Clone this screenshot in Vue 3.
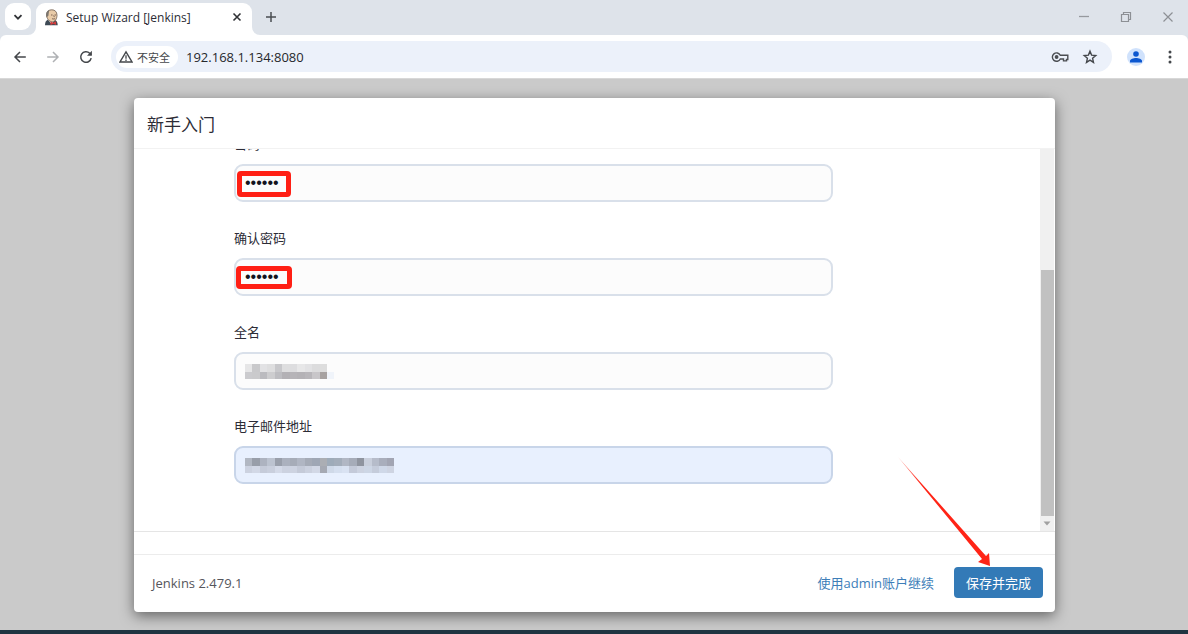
<script setup>
import { ref } from 'vue'

const CELL = 7.45

const fullNameCells = [
  ['#e6e6e7', '#c9c9cb', '#e2e2e4', '#dededf', '#c8c8cb', '#dededf', '#dddddf', '#e7e7e8', '#e2e2e4', '#dcdcdd', '#dddddd'],
  ['#cbcbce', '#cacacc', '#bbbbbf', '#cdcdcf', '#bdbdc1', '#b3b1b5', '#b6b4b8', '#b4b2b6', '#b8b6ba', '#c8c6c9', '#a7a2a1', '#f0f4fa']
]
const emailCells = [
  ['#b1b7c2', '#989ea9', '#adb3c0', '#bcc3d0', '#999fab', '#abb1be', '#a6acb8', '#b0b6c3', '#a5abb7', '#9fa7b5', '#abaeb4', '#9eabb9', '#a3adba', '#b1b7c4', '#a6acb9', '#8f949f', '#c9cfdc', '#b6bcca', '#a9aebc', '#a2a5b3'],
  ['#ccd2e0', '#d2d8e6', '#c5cbd9', '#c9cfdd', '#d4dae8', '#ccd2e0', '#cdd3e1', '#c4cad8', '#cbd1df', '#d2d8e6', '#a5a9b3', '#cfd9e8', '#d5dfef', '#d9e2f2', '#c4cad9', '#cdd3e1', '#cdd6e5', '#c5ccdb', '#cfd8e8', '#ced4e2']
]

const fields = ref([
  { id: 'password', label: '密码', type: 'password', value: '123456', mark: 'mark-tall' },
  { id: 'confirm', label: '确认密码', type: 'password', value: '123456', mark: 'mark-wide' },
  { id: 'fullname', label: '全名', type: 'text', value: '', cells: fullNameCells },
  { id: 'email', label: '电子邮件地址', type: 'text', value: '', cells: emailCells, autofilled: true }
])
</script>

<template>
  <div class="window">
    <header class="tab-strip">
      <button class="tab-search" aria-label="Search tabs">
        <svg width="12" height="12" viewBox="0 0 12 12"><path d="M2.500 4.200 6 7.700l3.500-3.500" fill="none" stroke="#303236" stroke-width="1.800" /></svg>
      </button>
      <div class="tab">
        <svg class="foot foot-left" width="8" height="8" viewBox="0 0 8 8"><path d="M8 0v8H0a8 8 0 0 0 8-8z" fill="#fff" /></svg>
        <svg class="favicon" width="16" height="17" viewBox="0 0 16 17">
          <path d="M1 16.200c0-3 1-4.700 3-5.700h6c2.500.8 3.700 2.700 3.700 5.700z" fill="#3d4a55" />
          <path d="M4.500 11.500 7.500 15l3-3.500-1-2h-5z" fill="#f3eee8" />
          <path d="M2.600 6C2.600 2.500 4.700.8 7.800.8s5.200 2 5.200 5.400c0 3.600-2 6.600-4.600 6.600C5.300 12.800 2.600 9.500 2.600 6z" fill="#e9cba8" stroke="#6b5a50" stroke-width=".8" />
          <path d="M2.500 8.500C1.500 4 3 1.500 5.500 1c-.8 2-.8 3.500-1 5.500z" fill="#7b756e" />
          <path d="M7 6h1.500M10.500 6H12M8 9.600c1 .5 2 .5 3 0M9.600 6.500l.8 1.600" fill="none" stroke="#60483c" stroke-width=".8" />
          <path d="m6.500 12.500 2.800 1.300 2.800-1.500v3.800l-2.800-1.300-2.800 1.500z" fill="#d53b3b" />
        </svg>
        <span class="tab-title">Setup Wizard [Jenkins]</span>
        <button class="tab-close" aria-label="Close tab">
          <svg width="10" height="10" viewBox="0 0 10 10"><path d="m1.500 1.500 7 7m0-7-7 7" stroke="#303236" stroke-width="1.600" /></svg>
        </button>
        <svg class="foot foot-right" width="8" height="8" viewBox="0 0 8 8"><path d="M0 0v8h8a8 8 0 0 1-8-8z" fill="#fff" /></svg>
      </div>
      <button class="new-tab" aria-label="New tab">
        <svg width="12" height="12" viewBox="0 0 12 12"><path d="M6 1v10M1 6h10" stroke="#4a4d51" stroke-width="1.500" /></svg>
      </button>
      <div class="window-controls">
        <button aria-label="Minimize"><svg width="12" height="12" viewBox="0 0 12 12"><path d="M1 5.500h10" stroke="#96999e" stroke-width="1.300" /></svg></button>
        <button aria-label="Restore"><svg width="12" height="12" viewBox="0 0 12 12"><path d="M1.500 3.500h7v7h-7zM3.500 3.500v-2h7v7h-2" fill="none" stroke="#8d9095" stroke-width="1.200" /></svg></button>
        <button aria-label="Close"><svg width="12" height="12" viewBox="0 0 12 12"><path d="m1.500 1.500 9 9m0-9-9 9" stroke="#8d9095" stroke-width="1.200" /></svg></button>
      </div>
    </header>

    <nav class="toolbar">
      <button class="nav" aria-label="Back">
        <svg width="14" height="14" viewBox="0 0 14 14"><path d="M12.800 7h-11M7 2 2 7l5 5" fill="none" stroke="#44474b" stroke-width="1.500" /></svg>
      </button>
      <button class="nav" aria-label="Forward">
        <svg width="14" height="14" viewBox="0 0 14 14"><path d="M1.200 7h11M7 2l5 5-5 5" fill="none" stroke="#afb1b4" stroke-width="1.500" /></svg>
      </button>
      <button class="nav" aria-label="Reload">
        <svg width="14" height="14" viewBox="0 0 14 14"><path d="M12.200 8.200A5.300 5.300 0 1 1 10.700 3.200L12.200 4.800" fill="none" stroke="#44474b" stroke-width="1.500" /><path d="M12.900.8v5H8z" fill="#44474b" /></svg>
      </button>
      <div class="omnibox">
        <button class="security">
          <svg width="14" height="14" viewBox="0 0 14 14"><path d="M7 1.800 13 12H1z" fill="none" stroke="#44474b" stroke-width="1.400" /><path d="M7 5.200v3.600M7 9.600V11" stroke="#44474b" stroke-width="1.300" /></svg>
          <span>不安全</span>
        </button>
        <input class="address" aria-label="Address" type="text" value="192.168.1.134:8080" />
        <button class="icon" aria-label="Passwords">
          <svg width="18" height="12" viewBox="0 0 18 12"><path d="M9.300 4.200h7.500v4.300h-1.300v1.400h-3V8H9.300A4.200 4.200 0 1 1 9.300 4.200z" fill="none" stroke="#4a4d51" stroke-width="1.400" /><circle cx="5.600" cy="6" r="1.900" fill="#4a4d51" /></svg>
        </button>
        <button class="icon" aria-label="Bookmark">
          <svg width="16" height="16" viewBox="0 0 16 16"><path d="m8 2.200 1.600 3.900 4.200.4-3.200 2.800.9 4.100L8 11.200l-3.500 2.200.9-4.100-3.200-2.800 4.200-.4z" fill="none" stroke="#44474b" stroke-width="1.400" /></svg>
        </button>
      </div>
      <button class="profile" aria-label="Profile">
        <svg width="12" height="12" viewBox="0 0 12 12"><circle cx="6" cy="3" r="2.800" fill="#0b57d0" /><path d="M0 11.500V10c0-2 3.500-3 6-3s6 1 6 3v1.500z" fill="#0b57d0" /></svg>
      </button>
      <button class="more" aria-label="Menu">
        <svg width="4" height="14" viewBox="0 0 4 14"><g fill="#44474b"><circle cx="2" cy="2" r="1.500" /><circle cx="2" cy="7" r="1.500" /><circle cx="2" cy="12" r="1.500" /></g></svg>
      </button>
    </nav>

    <main class="page">
      <section class="modal">
        <h1>新手入门</h1>
        <div class="body">
          <form class="form">
            <div v-for="field in fields" :key="field.id" class="field">
              <label :for="field.id">{{ field.label }}</label>
              <div class="control">
                <input :id="field.id" v-model="field.value" :type="field.type" :class="{ autofilled: field.autofilled }" autocomplete="off" />
                <span v-if="field.mark" class="mark" :class="field.mark"></span>
                <svg v-if="field.cells" class="mosaic" width="164" height="15" viewBox="0 0 164 15" shape-rendering="crispEdges">
                  <g v-for="(row, y) in field.cells" :key="y">
                    <rect v-for="(color, x) in row" :key="x" :x="x * CELL" :y="y * 7.5" :width="CELL" height="7.5" :fill="color" />
                  </g>
                </svg>
              </div>
            </div>
          </form>
          <div class="scrollbar">
            <div class="thumb"></div>
            <svg width="14" height="15" viewBox="0 0 14 15"><path d="M3.500 5.500h7L7 9.500z" fill="#a0a0a0" /></svg>
          </div>
        </div>
        <div class="spacer"></div>
        <footer>
          <span class="version">Jenkins 2.479.1</span>
          <a href="#">使用admin账户继续</a>
          <div class="save">
            <button>保存并完成</button>
            <svg class="arrow" width="94" height="110" viewBox="0 0 94 110">
              <defs>
                <linearGradient id="tail" x1="0" y1="0" x2="1" y2="1">
                  <stop offset="0" stop-color="#ff2416" stop-opacity=".4" />
                  <stop offset=".25" stop-color="#ff2416" />
                </linearGradient>
              </defs>
              <path d="M0 0 88 99l3-3 1 13-12-4 4-3z" fill="url(#tail)" />
            </svg>
          </div>
        </footer>
      </section>
    </main>
    <div class="taskbar"></div>
  </div>
</template>

<style>
body {
  margin: 0;
}
</style>

<style scoped>
* {
  box-sizing: border-box;
}
.window {
  display: flex;
  flex-direction: column;
  height: 100vh;
  overflow: hidden;
  background: #dee3ea;
  font-family: "Open Sans", "Noto Sans CJK SC", sans-serif;
  font-size: 13px;
  color: #2c2c36;
}
button {
  display: flex;
  align-items: center;
  justify-content: center;
  padding: 0;
  border: 0;
  background: none;
  font: inherit;
  color: inherit;
}
svg {
  display: block;
  flex: none;
}
.tab-strip {
  display: flex;
  align-items: flex-start;
  flex: none;
  height: 35px;
  padding: 3px 0 0 5px;
}
.tab-search {
  width: 26px;
  height: 27px;
  border-radius: 9px;
  background: #fff;
}
.tab {
  position: relative;
  display: flex;
  align-items: center;
  width: 216px;
  height: 32px;
  margin-left: 5px;
  padding: 0 9px 4px 8px;
  border-radius: 9px 9px 0 0;
  background: #fff;
}
.foot {
  position: absolute;
  bottom: 0;
}
.foot-left {
  right: 100%;
}
.foot-right {
  left: 100%;
}
.tab-title {
  flex: 1;
  margin-left: 6px;
  font-size: 12px;
  white-space: nowrap;
}
.tab-close {
  width: 12px;
  height: 12px;
}
.new-tab {
  width: 20px;
  height: 27px;
  margin-left: 9px;
}
.window-controls {
  display: flex;
  gap: 30px;
  height: 27px;
  margin: 0 14px 0 auto;
}
.window-controls button {
  width: 12px;
}
.toolbar {
  display: flex;
  align-items: center;
  flex: none;
  height: 43px;
  padding: 0 16px 0 12px;
  border-radius: 6px 6px 0 0;
  background: #fff;
}
.nav {
  width: 15px;
  height: 24px;
  margin-right: 18px;
}
.omnibox {
  display: flex;
  align-items: center;
  flex: 1;
  gap: 13px;
  height: 31px;
  padding: 0 14px 0 5px;
  border-radius: 16px;
  background: #ecf1fa;
}
.security {
  justify-content: flex-start;
  gap: 4px;
  width: 62px;
  height: 22px;
  padding-left: 3px;
  border-radius: 11px;
  background: #fff;
  font-size: 11px;
  color: #44474b;
}
.address {
  flex: 1;
  min-width: 0;
  height: 22px;
  margin-left: -5px;
  padding: 0;
  border: 0;
  background: none;
  font: inherit;
  color: #26282c;
}
.profile {
  width: 18px;
  height: 18px;
  margin-left: 15px;
  border-radius: 9px;
  background: #d0e2fc;
}
.more {
  width: 5px;
  height: 24px;
  margin-left: 22px;
}
.page {
  display: flex;
  flex: 1;
  min-height: 0;
  padding: 19px 133px 18px 134px;
  border-top: 1px solid #d8d8d8;
  background: #cacaca;
}
.modal {
  display: flex;
  flex: 1;
  flex-direction: column;
  min-width: 0;
  border-radius: 4px;
  background: #fff;
  box-shadow: 0 4px 14px rgba(0, 0, 0, 0.5);
}
h1 {
  flex: none;
  height: 51px;
  margin: 0;
  padding: 0 13px;
  border-bottom: 1px solid #f2f2f2;
  font-size: 17px;
  font-weight: 400;
  line-height: 54px;
}
.body {
  display: flex;
  flex: 1;
  min-height: 0;
  padding-right: 1px;
}
.form {
  display: flex;
  flex: 1;
  flex-direction: column;
  justify-content: flex-end;
  gap: 26px;
  overflow: hidden;
  padding: 0 207px 47px 100px;
}
.field {
  display: flex;
  flex: none;
  flex-direction: column;
  gap: 10px;
}
label {
  line-height: 20px;
}
.control {
  position: relative;
}
.control input {
  display: block;
  width: 100%;
  height: 38px;
  padding: 0 9px;
  border: 2px solid #d9e0ea;
  border-radius: 9px;
  background: #fcfcfc;
  font-family: "Liberation Sans", sans-serif;
  font-size: 16px;
  color: #14141f;
  outline: 0;
}
.control input.autofilled {
  border-color: #c8d5e9;
  background: #e8f0fe;
}
.mark {
  position: absolute;
  border: 5px solid #ff1f14;
  border-radius: 4px;
  pointer-events: none;
}
.mark-tall {
  left: 3px;
  top: 7px;
  width: 54px;
  height: 26px;
}
.mark-wide {
  left: 2px;
  top: 8px;
  width: 56px;
  height: 23px;
}
.mosaic {
  position: absolute;
  left: 11px;
  top: 12px;
}
.scrollbar {
  display: flex;
  flex-direction: column;
  width: 14px;
  background: #f0f0f0;
}
.thumb {
  flex: 1;
  margin: 121px 0 0 1px;
  background: #c1c1c1;
}
.spacer {
  flex: none;
  height: 23px;
  border-top: 1px solid #e5e5e5;
}
footer {
  display: flex;
  align-items: center;
  flex: none;
  height: 58px;
  padding: 0 12px 2px 18px;
  border-top: 1px solid #ececec;
}
.version {
  flex: 1;
  color: #55565c;
}
a {
  margin-right: 20px;
  color: #3d7eb8;
  text-decoration: none;
}
.save {
  position: relative;
}
.save button {
  height: 31px;
  padding: 0 12px;
  border-radius: 4px;
  background: #337ab7;
  color: #fff;
}
.arrow {
  position: absolute;
  right: 51px;
  bottom: 100%;
}
.taskbar {
  flex: none;
  height: 4px;
  background: #203441;
}
</style>
